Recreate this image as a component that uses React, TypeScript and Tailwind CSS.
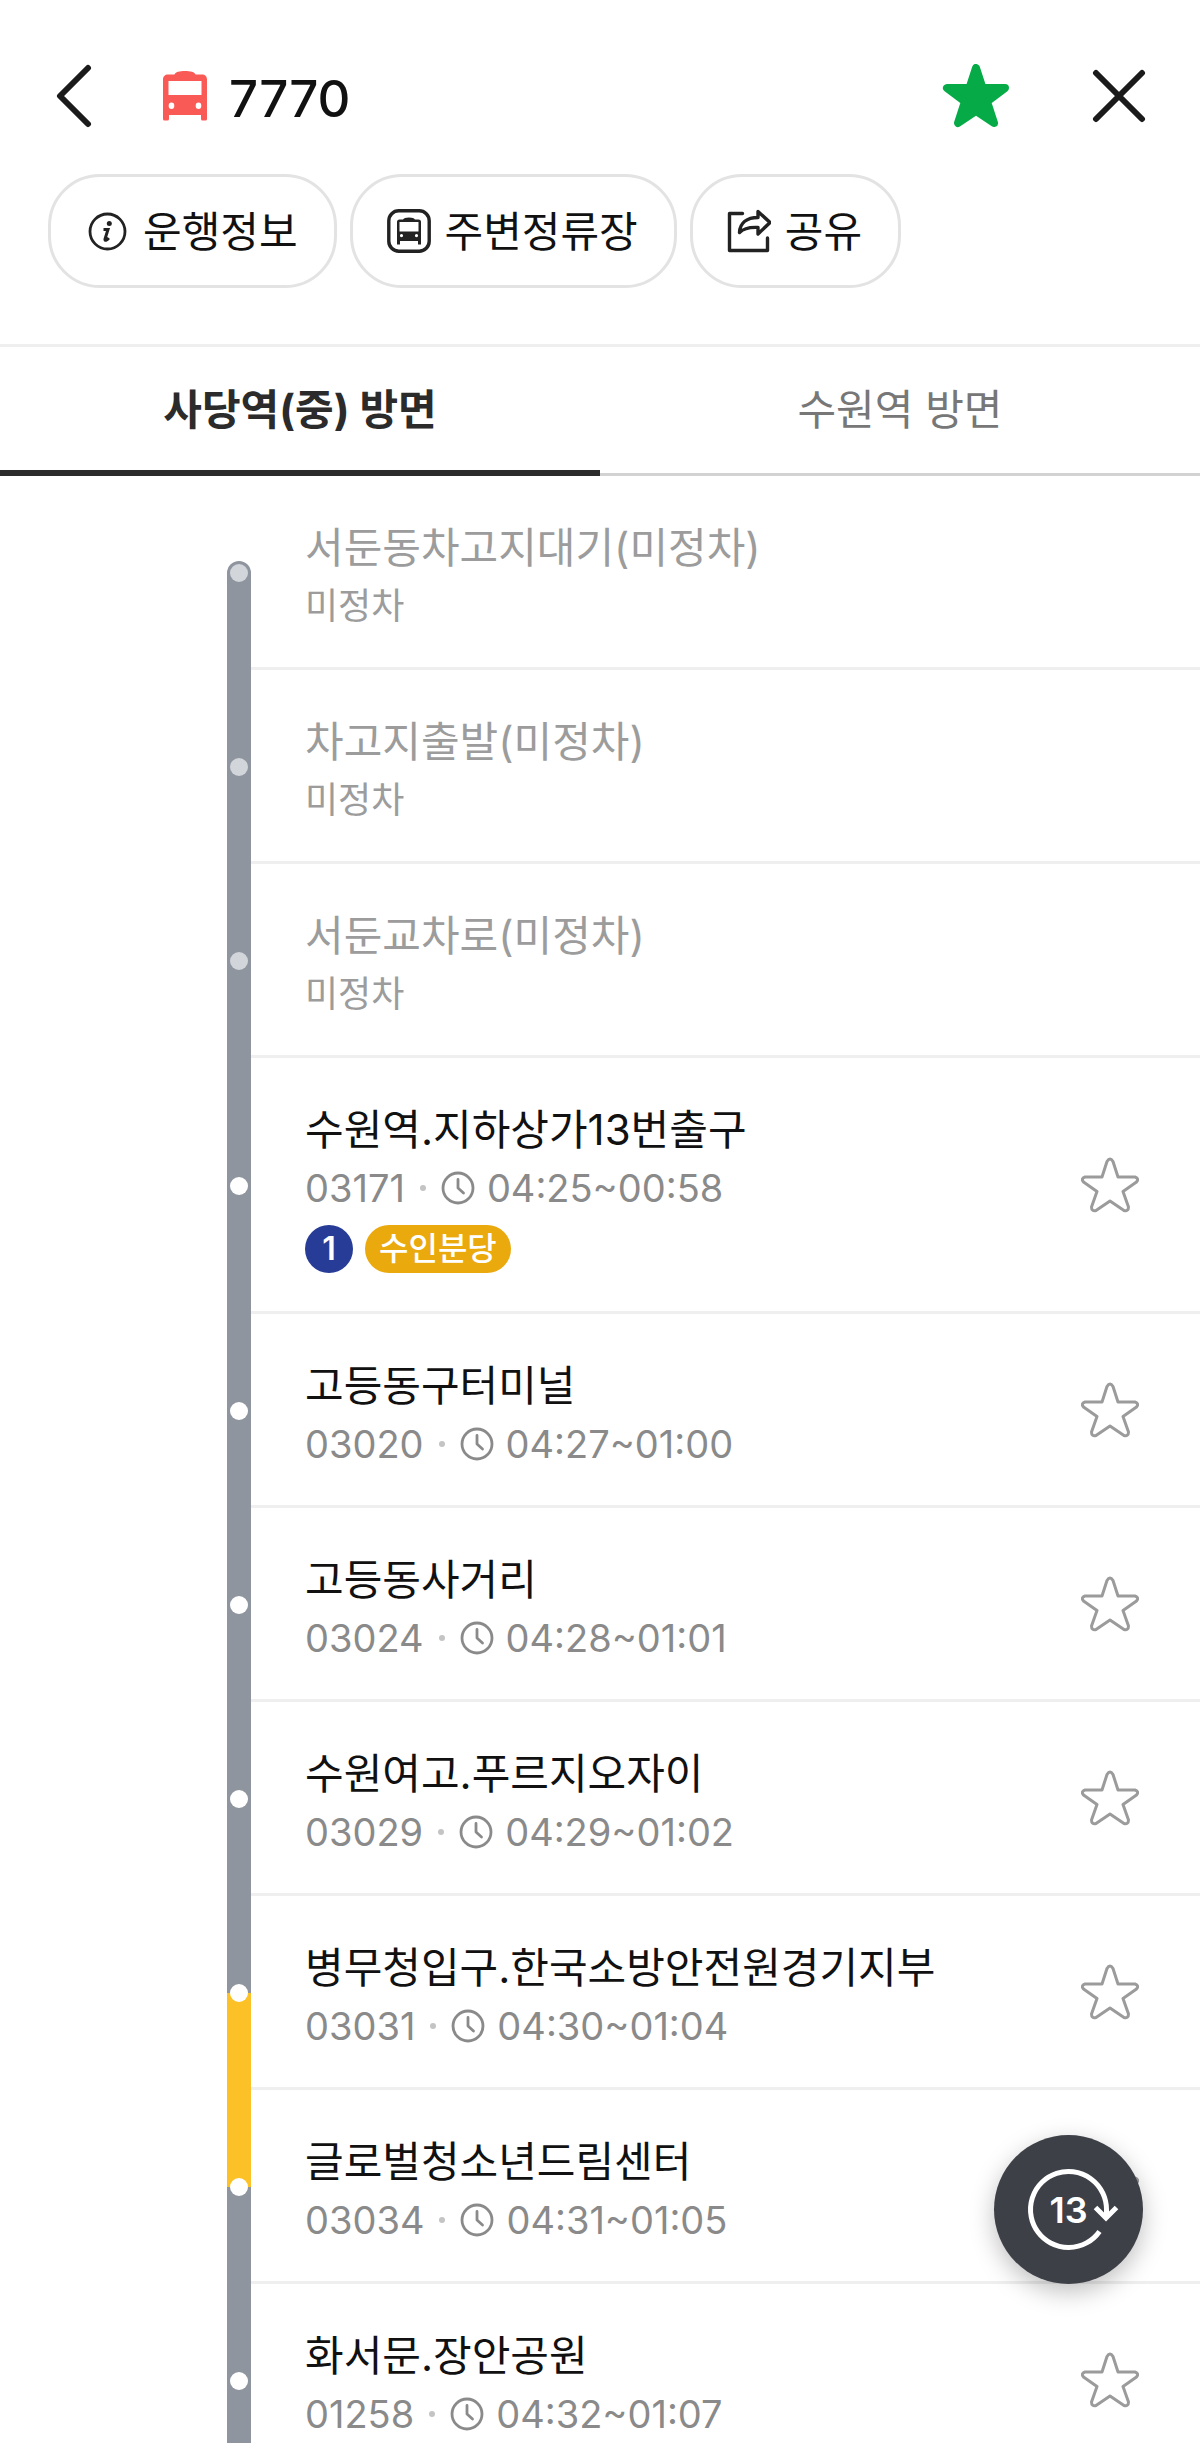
type Stop = {
  name: string;
  id?: string;
  hours?: string;
  lines?: boolean;
  before: string;
  after: string;
};

const GRAY = "bg-[#8e959f]";
const YELLOW = "bg-[#fcc126]";

const stops: Stop[] = [
  { name: "서둔동차고지대기(미정차)", before: "", after: GRAY },
  { name: "차고지출발(미정차)", before: GRAY, after: GRAY },
  { name: "서둔교차로(미정차)", before: GRAY, after: GRAY },
  {
    name: "수원역.지하상가13번출구",
    id: "03171",
    hours: "04:25~00:58",
    lines: true,
    before: GRAY,
    after: GRAY,
  },
  { name: "고등동구터미널", id: "03020", hours: "04:27~01:00", before: GRAY, after: GRAY },
  { name: "고등동사거리", id: "03024", hours: "04:28~01:01", before: GRAY, after: GRAY },
  { name: "수원여고.푸르지오자이", id: "03029", hours: "04:29~01:02", before: GRAY, after: GRAY },
  {
    name: "병무청입구.한국소방안전원경기지부",
    id: "03031",
    hours: "04:30~01:04",
    before: GRAY,
    after: YELLOW,
  },
  { name: "글로벌청소년드림센터", id: "03034", hours: "04:31~01:05", before: YELLOW, after: GRAY },
  { name: "화서문.장안공원", id: "01258", hours: "04:32~01:07", before: GRAY, after: GRAY },
];

function BackIcon() {
  return (
    <svg className="h-16 w-9" viewBox="0 0 36 64" fill="none" stroke="#1b1b1b" strokeWidth="6">
      <path d="M32 4 4 32l28 28" strokeLinecap="round" strokeLinejoin="round" />
    </svg>
  );
}

function CloseIcon() {
  return (
    <svg className="size-14" viewBox="0 0 56 56" fill="none" stroke="#1b1b1b" strokeWidth="6">
      <path d="m6 5 46 46M52 5 6 51" strokeLinecap="round" />
    </svg>
  );
}

function BusIcon() {
  return (
    <svg className="h-[50px] w-11" viewBox="0 0 44 50">
      <path
        fill="#fa5a55"
        fillRule="evenodd"
        d="M5 3.500h6.500C12 1 17 0 22 0s10 1 10.500 3.500H39c3 0 5 2 5 5V48q0 1.500-1.500 1.500h-3Q38 49.500 38 48v-4H6v4q0 1.500-1.500 1.500h-3Q0 49.500 0 48V8.500c0-3 2-5 5-5ZM5.500 10v14h33V10ZM8.500 31.500a2.800 3.200 0 1 0 0 6.400 2.800 3.200 0 0 0 0-6.400Zm27 0a2.800 3.200 0 1 0 0 6.400 2.800 3.200 0 0 0 0-6.400Z"
      />
    </svg>
  );
}

function FilledStar() {
  return (
    <svg className="h-16 w-[68px]" viewBox="0 0 68 64">
      <path
        d="M34 4l6.500 20H63L45 37.500 52 59 34 47 16 59 23 37.500 5 24h22.500Z"
        fill="#06ab48"
        stroke="#06ab48"
        strokeWidth="8"
        strokeLinejoin="round"
      />
    </svg>
  );
}

function StarIcon() {
  return (
    <svg className="size-[58px]" viewBox="0 0 58 58" fill="none">
      <path
        d="M26 5.500q3-5 6 0L37 21h17q4.500 1.500 1.500 5L42 35.500 47.500 51q0 4.500-4.500 3.500L29 45 15 54.500q-4.500 1-4.500-3.500L16 35.500 2.500 26Q-.5 22.500 4 21h17Z"
        stroke="#9b9b9b"
        strokeWidth="3"
        strokeLinejoin="round"
      />
    </svg>
  );
}

function InfoIcon() {
  return (
    <svg className="size-11" viewBox="0 0 44 44">
      <circle cx="22.500" cy="22.500" r="17.500" fill="none" stroke="#222" strokeWidth="2.800" />
      <circle cx="24.300" cy="14.500" r="2.500" fill="#222" />
      <path
        d="M18.500 20.500h4.500l-3 9.500q-.3 1.500 1 1.300 1.300-.4 2.800-2.300"
        fill="none"
        stroke="#222"
        strokeWidth="3"
      />
    </svg>
  );
}

function StopIcon() {
  return (
    <svg className="size-11" viewBox="0 0 44 44">
      <rect x="1.800" y="1.800" width="40.400" height="40.400" rx="10" fill="none" stroke="#222" strokeWidth="3.400" />
      <path
        fill="#222"
        fillRule="evenodd"
        d="M12.500 10.500H16q1-2 6-2t6 2h3.500q2.500 0 2.500 2.500v22.500h-3V32H13v3.500h-3V13q0-2.500 2.500-2.500ZM12.500 13v9.500h19V13ZM14.500 25a1.600 1.600 0 1 0 0 3.200 1.600 1.600 0 0 0 0-3.200Zm15 0a1.600 1.600 0 1 0 0 3.200 1.600 1.600 0 0 0 0-3.200Z"
      />
    </svg>
  );
}

function ShareIcon() {
  return (
    <svg className="size-11" viewBox="0 0 44 44" fill="none" stroke="#222" strokeWidth="3.400">
      <path d="M15.500 4.500H2.500v37h38V29" strokeLinecap="round" strokeLinejoin="round" />
      <path
        d="M31 2.500 43 13.500 31 25v-6.500C22 18 17 19 12.500 23.500 13 14 20 8.500 31 8.500Z"
        strokeLinejoin="round"
      />
    </svg>
  );
}

function ClockIcon() {
  return (
    <svg className="size-[34px]" viewBox="0 0 34 34" fill="none" stroke="#8a8a8a" strokeWidth="2.800">
      <circle cx="17" cy="17" r="15" />
      <path d="M17 8.500V17l5.500 5" strokeLinecap="round" strokeLinejoin="round" />
    </svg>
  );
}

const chips = [
  { label: "운행정보", icon: <InfoIcon /> },
  { label: "주변정류장", icon: <StopIcon /> },
  { label: "공유", icon: <ShareIcon /> },
];

function Rail({ stop, first }: { stop: Stop; first: boolean }) {
  return (
    <div className="relative flex w-6 shrink-0 flex-col">
      <div className={`flex flex-1 flex-col justify-end ${stop.before}`}>
        {first && <div className="h-3 rounded-t-full bg-[#8e959f]" />}
      </div>
      <div className={`flex-1 ${stop.after}`} />
      <span
        className={`absolute inset-0 m-auto size-[18px] rounded-full ${
          stop.id ? "bg-white" : "bg-[#d2d5da]"
        }`}
      />
    </div>
  );
}

function StopRow({ stop, first }: { stop: Stop; first: boolean }) {
  return (
    <li className="flex shrink-0">
      <div className="w-[227px] shrink-0" />
      <Rail stop={stop} first={first} />
      <div className="flex min-w-0 flex-1 items-center border-b-[3px] border-[#efefef] pr-[61px] pl-[54px]">
        <div className="min-w-0 flex-1 pt-11 pb-[35px]">
          <p
            className={`truncate text-[42px] leading-14 ${stop.id ? "text-[#111]" : "text-[#9c9c9c]"}`}
          >
            {stop.name}
          </p>
          {stop.id ? (
            <div className="mt-1 flex items-center gap-[15px] text-[38px] leading-[52px] text-[#8a8a8a]">
              <span>{stop.id}</span>
              <span className="size-1.5 rounded-full bg-[#c4c4c4]" />
              <span className="flex items-center gap-3">
                <ClockIcon />
                {stop.hours}
              </span>
            </div>
          ) : (
            <p className="mt-1 text-[36px] leading-[52px] text-[#9c9c9c]">미정차</p>
          )}
          {stop.lines && (
            <div className="mt-[11px] mb-[3px] flex items-center gap-3 text-[32px] leading-12 text-white">
              <span className="size-12 rounded-full bg-[#263c96] text-center font-semibold">1</span>
              <span className="rounded-full bg-[#eaa90c] px-3.5 font-medium">수인분당</span>
            </div>
          )}
        </div>
        {stop.id && (
          <button type="button" aria-label={`${stop.name} 즐겨찾기`} className="cursor-pointer">
            <StarIcon />
          </button>
        )}
      </div>
    </li>
  );
}

export default function App() {
  return (
    <div className="relative flex h-screen flex-col overflow-hidden bg-white font-['Inter','Noto_Sans_CJK_KR',sans-serif]">
      <header className="border-b-[3px] border-[#efefef] px-12 pt-16 pb-14">
        <div className="flex h-16 items-center pr-1.5 pl-2">
          <button type="button" aria-label="뒤로" className="cursor-pointer">
            <BackIcon />
          </button>
          <h1 className="ml-[71px] flex items-center gap-[22px] text-[#111]">
            <BusIcon />
            <span className="pt-1.5 text-[51px] leading-16 font-medium">7770</span>
          </h1>
          <div className="ml-auto flex items-center gap-20">
            <button type="button" aria-label="즐겨찾기" className="cursor-pointer">
              <FilledStar />
            </button>
            <button type="button" aria-label="닫기" className="cursor-pointer">
              <CloseIcon />
            </button>
          </div>
        </div>
        <div className="mt-[46px] flex gap-[13px]">
          {chips.map((chip) => (
            <button
              key={chip.label}
              type="button"
              className="flex h-[114px] cursor-pointer items-center gap-3.5 rounded-[52px] border-[3px] border-[#e3e3e3] pr-9 pl-[34px] text-[42px] text-[#111]"
            >
              {chip.icon}
              {chip.label}
            </button>
          ))}
        </div>
      </header>

      <div role="tablist" className="grid grid-cols-2 text-[42px] leading-[121px]">
        <button
          type="button"
          role="tab"
          aria-selected="true"
          className="cursor-pointer border-b-[6px] border-[#2b2b2b] pt-0.5 font-bold text-[#2b2b2b]"
        >
          사당역(중) 방면
        </button>
        <button
          type="button"
          role="tab"
          aria-selected="false"
          className="cursor-pointer border-b-[3px] border-[#d2d2d2] pt-0.5 pb-[3px] text-[#777]"
        >
          수원역 방면
        </button>
      </div>

      <ul className="flex min-h-0 flex-1 flex-col overflow-y-auto [scrollbar-width:none]">
        {stops.map((stop, i) => (
          <StopRow key={stop.name} stop={stop} first={i === 0} />
        ))}
      </ul>

      <button
        type="button"
        aria-label="새로고침"
        className="absolute right-[57px] bottom-[159px] flex size-[149px] cursor-pointer items-center justify-center rounded-full bg-[#3d4047] shadow-[0_8px_24px_rgba(0,0,0,0.25)]"
      >
        <svg
          className="absolute inset-0"
          viewBox="0 0 149 149"
          fill="none"
          stroke="#fff"
          strokeWidth="5"
        >
          <path d="M112.500 83V74.500a38 38 0 1 0-7 22" />
          <path d="m101.500 72.500 10.500 10.500 10.500-10.500" />
        </svg>
        <span className="text-[36px] font-semibold text-white">13</span>
      </button>
    </div>
  );
}
